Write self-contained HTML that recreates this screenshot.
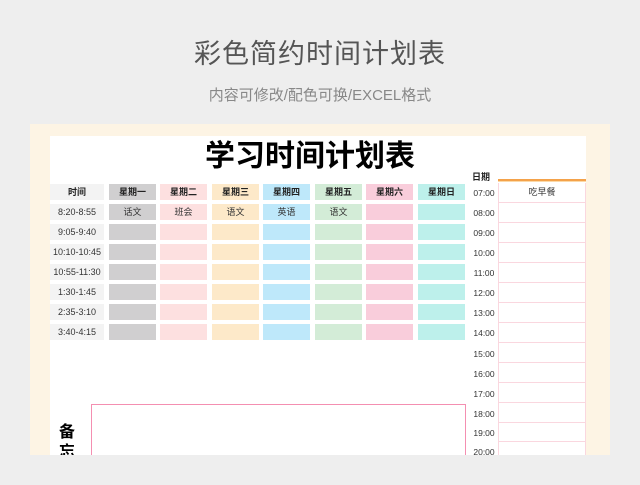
<!DOCTYPE html>
<html><head><meta charset="utf-8"><style>
*{margin:0;padding:0;box-sizing:border-box}
body{width:640px;height:485px;background:#eeeeee;position:relative;overflow:hidden;font-family:"Liberation Sans","Noto Sans CJK SC",sans-serif}
.a{position:absolute}
.h1{left:0;width:640px;top:36px;text-align:center;font-size:27px;color:#555;letter-spacing:1px;line-height:36px}
.h2{left:0;width:640px;top:86px;text-align:center;font-size:15px;color:#888;line-height:20px}
.panel{left:30px;top:124px;width:580px;height:331px;background:#fdf4e4}
.sheet{left:50px;top:136px;width:536px;height:319px;background:#fff}
.title{left:50px;width:520px;top:137px;text-align:center;font-size:30px;font-weight:bold;line-height:40px;color:#000}
.c{position:absolute;height:16px;font-size:9px;line-height:16px;text-align:center;color:#333}
.t{left:50px;width:54px;background:#f3f3f3}
.hd{font-weight:bold;color:#222}
.g{background:#d0cfd0}.p{background:#fde0e0}.o{background:#fde9c9}.b{background:#bee8fa}.gr{background:#d3ecd7}.pk{background:#f9cddb}.cy{background:#bdf0eb}
.tm{position:absolute;left:470px;width:28px;font-size:8.5px;color:#333;text-align:center;line-height:12px}
.bx{position:absolute;left:498px;width:88px;border:1px solid #fad7df;border-top:none;background:#fff}
</style></head><body>
<div class="a h1">彩色简约时间计划表</div>
<div class="a h2">内容可修改/配色可换/EXCEL格式</div>
<div class="a panel"></div>
<div class="a sheet"></div>
<div class="a title">学习时间计划表</div>

<!-- header row -->
<div class="c t hd" style="top:184px">时间</div>
<div class="c hd g" style="top:184px;left:109px;width:47px">星期一</div>
<div class="c hd p" style="top:184px;left:160px;width:47px">星期二</div>
<div class="c hd o" style="top:184px;left:212px;width:47px">星期三</div>
<div class="c hd b" style="top:184px;left:263px;width:47px">星期四</div>
<div class="c hd gr" style="top:184px;left:315px;width:47px">星期五</div>
<div class="c hd pk" style="top:184px;left:366px;width:47px">星期六</div>
<div class="c hd cy" style="top:184px;left:418px;width:47px">星期日</div>

<div class="c t" style="top:204px">8:20-8:55</div>
<div class="c g" style="top:204px;left:109px;width:47px">话文</div>
<div class="c p" style="top:204px;left:160px;width:47px">班会</div>
<div class="c o" style="top:204px;left:212px;width:47px">语文</div>
<div class="c b" style="top:204px;left:263px;width:47px">英语</div>
<div class="c gr" style="top:204px;left:315px;width:47px">语文</div>
<div class="c pk" style="top:204px;left:366px;width:47px"></div>
<div class="c cy" style="top:204px;left:418px;width:47px"></div>

<div class="c t" style="top:224px">9:05-9:40</div>
<div class="c g" style="top:224px;left:109px;width:47px"></div><div class="c p" style="top:224px;left:160px;width:47px"></div><div class="c o" style="top:224px;left:212px;width:47px"></div><div class="c b" style="top:224px;left:263px;width:47px"></div><div class="c gr" style="top:224px;left:315px;width:47px"></div><div class="c pk" style="top:224px;left:366px;width:47px"></div><div class="c cy" style="top:224px;left:418px;width:47px"></div>

<div class="c t" style="top:244px">10:10-10:45</div>
<div class="c g" style="top:244px;left:109px;width:47px"></div><div class="c p" style="top:244px;left:160px;width:47px"></div><div class="c o" style="top:244px;left:212px;width:47px"></div><div class="c b" style="top:244px;left:263px;width:47px"></div><div class="c gr" style="top:244px;left:315px;width:47px"></div><div class="c pk" style="top:244px;left:366px;width:47px"></div><div class="c cy" style="top:244px;left:418px;width:47px"></div>

<div class="c t" style="top:264px">10:55-11:30</div>
<div class="c g" style="top:264px;left:109px;width:47px"></div><div class="c p" style="top:264px;left:160px;width:47px"></div><div class="c o" style="top:264px;left:212px;width:47px"></div><div class="c b" style="top:264px;left:263px;width:47px"></div><div class="c gr" style="top:264px;left:315px;width:47px"></div><div class="c pk" style="top:264px;left:366px;width:47px"></div><div class="c cy" style="top:264px;left:418px;width:47px"></div>

<div class="c t" style="top:284px">1:30-1:45</div>
<div class="c g" style="top:284px;left:109px;width:47px"></div><div class="c p" style="top:284px;left:160px;width:47px"></div><div class="c o" style="top:284px;left:212px;width:47px"></div><div class="c b" style="top:284px;left:263px;width:47px"></div><div class="c gr" style="top:284px;left:315px;width:47px"></div><div class="c pk" style="top:284px;left:366px;width:47px"></div><div class="c cy" style="top:284px;left:418px;width:47px"></div>

<div class="c t" style="top:304px">2:35-3:10</div>
<div class="c g" style="top:304px;left:109px;width:47px"></div><div class="c p" style="top:304px;left:160px;width:47px"></div><div class="c o" style="top:304px;left:212px;width:47px"></div><div class="c b" style="top:304px;left:263px;width:47px"></div><div class="c gr" style="top:304px;left:315px;width:47px"></div><div class="c pk" style="top:304px;left:366px;width:47px"></div><div class="c cy" style="top:304px;left:418px;width:47px"></div>

<div class="c t" style="top:324px">3:40-4:15</div>
<div class="c g" style="top:324px;left:109px;width:47px"></div><div class="c p" style="top:324px;left:160px;width:47px"></div><div class="c o" style="top:324px;left:212px;width:47px"></div><div class="c b" style="top:324px;left:263px;width:47px"></div><div class="c gr" style="top:324px;left:315px;width:47px"></div><div class="c pk" style="top:324px;left:366px;width:47px"></div><div class="c cy" style="top:324px;left:418px;width:47px"></div>

<!-- right column -->
<div class="a" style="left:472px;top:170px;font-size:9px;font-weight:bold;color:#222">日期</div>
<div class="a" style="left:498px;top:179px;width:88px;height:3px;background:#f4a24a;border-bottom:1px solid #fbd9a8"></div>
<div class="bx" style="top:183px;height:20px;font-size:9px;line-height:19px;text-align:center;color:#333">吃早餐</div>
<div class="bx" style="top:203px;height:20px"></div>
<div class="bx" style="top:223px;height:20px"></div>
<div class="bx" style="top:243px;height:20px"></div>
<div class="bx" style="top:263px;height:20px"></div>
<div class="bx" style="top:283px;height:20px"></div>
<div class="bx" style="top:303px;height:20px"></div>
<div class="bx" style="top:323px;height:20px"></div>
<div class="bx" style="top:343px;height:20px"></div>
<div class="bx" style="top:363px;height:20px"></div>
<div class="bx" style="top:383px;height:20px"></div>
<div class="bx" style="top:403px;height:20px"></div>
<div class="bx" style="top:423px;height:19px"></div>
<div class="bx" style="top:442px;height:19px"></div>
<div class="tm" style="top:187px">07:00</div>
<div class="tm" style="top:207px">08:00</div>
<div class="tm" style="top:227px">09:00</div>
<div class="tm" style="top:247px">10:00</div>
<div class="tm" style="top:267px">11:00</div>
<div class="tm" style="top:287px">12:00</div>
<div class="tm" style="top:307px">13:00</div>
<div class="tm" style="top:327px">14:00</div>
<div class="tm" style="top:348px">15:00</div>
<div class="tm" style="top:368px">16:00</div>
<div class="tm" style="top:388px">17:00</div>
<div class="tm" style="top:408px">18:00</div>
<div class="tm" style="top:427px">19:00</div>
<div class="tm" style="top:446px">20:00</div>

<!-- memo -->
<div class="a" style="left:91px;top:404px;width:375px;height:60px;border:1.5px solid #f48fb1"></div>
<div class="a" style="left:59px;top:423px;width:18px;font-size:16px;font-weight:bold;line-height:20px;color:#000">备<br>忘</div>

<div class="a" style="left:0;top:455px;width:640px;height:30px;background:#eeeeee"></div>
</body></html>
